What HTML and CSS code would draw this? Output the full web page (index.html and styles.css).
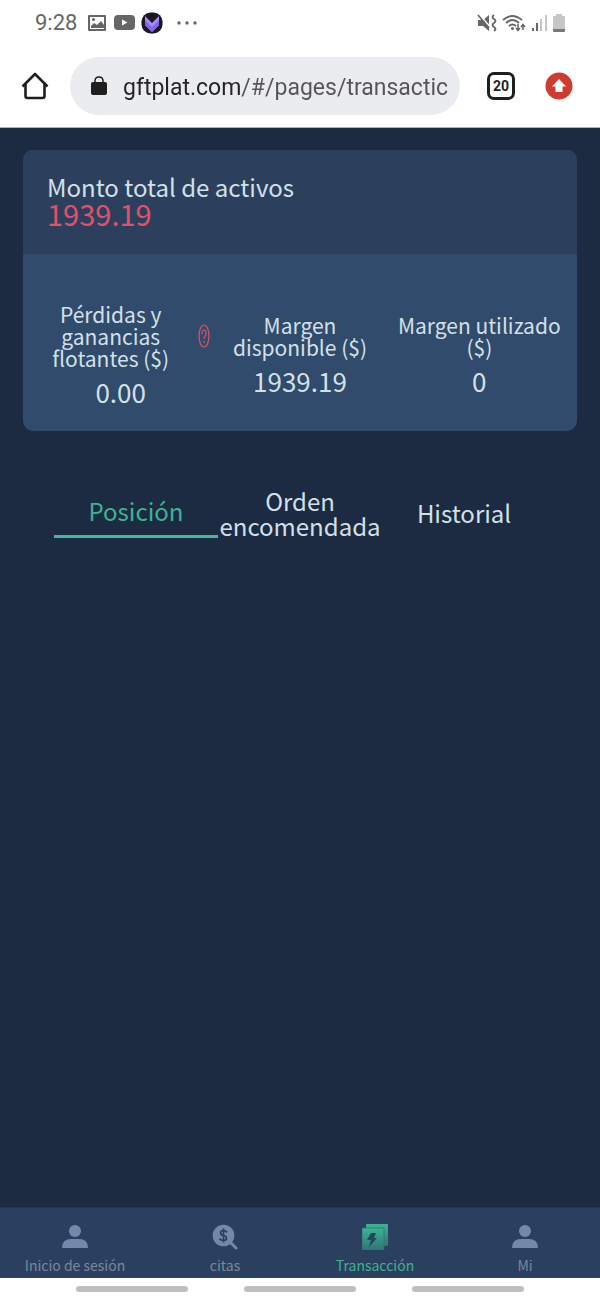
FILE: index.html
```html
<!DOCTYPE html>
<html lang="es">
<head>
<meta charset="utf-8">
<meta name="viewport" content="width=device-width, initial-scale=1">
<title>Transacción</title>
<link rel="stylesheet" href="styles.css">
</head>
<body>
<div class="status-bar">
  <span class="clock">9:28</span>
  <svg class="status-photo" width="18" height="18" viewBox="0 0 18 18"><path fill="#666" fill-rule="evenodd" d="M1 1h16q1 0 1 1v14q0 1-1 1H1q-1 0-1-1V2q0-1 1-1zM2 3v12h14V3z"/><path fill="#666" d="M3 14v-2l3-3 3 2 4-4 3 4v3z"/><circle cx="5.500" cy="5.500" r="1.600" fill="#666"/></svg>
  <svg class="status-video" width="22" height="18" viewBox="0 0 22 18"><rect x="0" y="1" width="21" height="15" rx="4" fill="#666"/><path fill="#fff" d="M8 5.500l5.500 3-5.500 3z"/></svg>
  <svg class="status-app" width="22" height="22" viewBox="0 0 22 22"><rect x=".5" y=".5" width="21" height="21" rx="9" fill="#1b1724"/><path fill="#a78bfa" d="M4 4l7 7 7-7v9l-7 7-7-7z"/><path fill="#8465ee" d="M4 8l7 7 7-7v5l-7 7-7-7z"/></svg>
  <svg class="status-more" width="20" height="6" viewBox="0 0 20 6" fill="#666"><circle cx="2" cy="3" r="1.700"/><circle cx="10" cy="3" r="1.700"/><circle cx="18" cy="3" r="1.700"/></svg>
  <div class="signals">
    <svg width="20" height="18" viewBox="0 0 20 18"><path fill="#666" d="M1 6h5l6-5v16l-6-5H1z"/><path d="M2 0l12 14" stroke="#fff" stroke-width="1.500"/><path d="M1 1l11 13M17 1q-3 2 0 4t0 4 0 4 0 4" stroke="#666" stroke-width="1.800" fill="none"/></svg>
    <svg width="24" height="18" viewBox="0 0 24 18"><path d="M1 6q9-8 19 0M4 9q6.500-6 13 0M7 12q3.500-3 7 0" fill="none" stroke="#666" stroke-width="1.800"/><circle cx="10.500" cy="14.500" r="1.500" fill="#666"/><path d="M16 10v6m-2-2l2 2.500 2-2.500M21 16v-5m-2 2l2-2.500 2 2.500" fill="none" stroke="#666" stroke-width="1.500"/></svg>
    <svg width="17" height="18" viewBox="0 0 17 18"><path fill="#666" d="M1 14h2v3H1zM5 9h2v8H5z"/><path fill="#c6c6c6" d="M9 5h2v12H9zM14 1h2v16h-2z"/></svg>
    <svg width="12" height="18" viewBox="0 0 12 18"><path fill="#c6c6c6" d="M3 0h6v2h2q1 0 1 1v12H0V3q0-1 1-1h2z"/><path fill="#777" d="M0 15h12v2q0 1-1 1H1q-1 0-1-1z"/></svg>
  </div>
</div>

<header class="toolbar">
  <button class="icon-button" aria-label="Inicio"><svg width="28" height="28" viewBox="0 0 28 28" fill="none" stroke="#1f1f1f" stroke-width="2.600" stroke-linejoin="round"><path d="M1.500 14.500L14 2l12.500 12.500"/><path d="M4.500 12v12q0 2 2 2h15q2 0 2-2V12"/></svg></button>
  <label class="address">
    <svg width="16" height="20" viewBox="0 0 16 20"><rect y="6" width="16" height="13" rx="2" fill="#1f1f1f"/><path d="M4 7V5q0-4 4-4t4 4v2" fill="none" stroke="#1f1f1f" stroke-width="1.500"/></svg>
    <input class="url" type="text" aria-label="Dirección web" value="gftplat.com/#/pages/transactic">
  </label>
  <button class="icon-button tab-count" aria-label="20 pestañas">20</button>
  <button class="icon-button" aria-label="Actualizar"><svg width="28" height="28" viewBox="0 0 28 28"><circle cx="14" cy="14" r="13.500" fill="#d03b2f"/><path fill="#fff" d="M14 7l7 7.500h-3.500V20h-7v-5.500H7z"/></svg></button>
</header>

<main class="app">
  <section class="card">
    <div class="card-head">
      <h1 class="card-title">Monto total de activos</h1>
      <div class="total">1939.19</div>
    </div>
    <div class="stats">
      <div class="stat">
        <div class="stat-label"><span class="stat-text">Pérdidas y ganancias flotantes ($)</span><button class="help" aria-label="Ayuda"><svg width="12" height="24" viewBox="0 0 12 24" fill="none" stroke="#e0526a"><ellipse cx="6" cy="12" rx="5" ry="11" stroke-width="1.200"/><path d="M4 10q0-4 2-4t2 3.500q0 1.500-1 2.500t-1 3M6 17v2" stroke-width="1.200"/></svg></button></div>
        <div class="stat-value">0.00</div>
      </div>
      <div class="stat">
        <div class="stat-label"><span class="stat-text">Margen disponible ($)</span></div>
        <div class="stat-value">1939.19</div>
      </div>
      <div class="stat">
        <div class="stat-label"><span class="stat-text">Margen utilizado ($)</span></div>
        <div class="stat-value">0</div>
      </div>
    </div>
  </section>
  <div class="tabs">
    <button class="tab tab-active">Posición</button>
    <button class="tab">Orden encomendada</button>
    <button class="tab">Historial</button>
  </div>
</main>

<nav class="bottom-nav">
  <a class="nav-item" href="#inicio"><svg width="26" height="26" viewBox="0 0 26 26" fill="#7389ab"><circle cx="13" cy="7" r="6"/><path d="M0 24q0-9 9-9h8q9 0 9 9z"/></svg>Inicio de sesión</a>
  <a class="nav-item" href="#citas"><svg width="26" height="26" viewBox="0 0 26 26"><circle cx="11.500" cy="11.500" r="10.800" fill="#7389ab"/><path d="M18 18l6 6" stroke="#7389ab" stroke-width="3" stroke-linecap="round"/><path d="M15 8.500q-1-2-3.500-2c-4 0-4 4.500 0 5s4 5 0 5q-3 0-4-2M11.500 4.500v14" fill="none" stroke="#2b405e" stroke-width="1.700"/></svg>citas</a>
  <a class="nav-item nav-active" href="#transaccion"><svg width="26" height="26" viewBox="0 0 26 26"><defs><linearGradient id="sheet" x2="0" y2="1"><stop stop-color="#3db394"/><stop offset="1" stop-color="#307575"/></linearGradient></defs><rect x="4" y="0" width="22" height="22" rx="1" fill="url(#sheet)"/><rect x="0" y="4" width="22" height="22" rx="1" fill="url(#sheet)" stroke="#2c7772" stroke-width=".8"/><path fill="#24485b" d="M9 9h5l-2 5h3l-8 9 2-7H5z"/></svg>Transacción</a>
  <a class="nav-item" href="#mi"><svg width="26" height="26" viewBox="0 0 26 26" fill="#7389ab"><circle cx="13" cy="7" r="6"/><path d="M0 24q0-9 9-9h8q9 0 9 9z"/></svg>Mi</a>
</nav>
<div class="gestures"><span class="handle"></span><span class="handle"></span><span class="handle"></span></div>
</body>
</html>
```
FILE: styles.css
```css
* { box-sizing: border-box; }
body {
  margin: 0;
  min-height: 100vh;
  display: flex;
  flex-direction: column;
  background: #fff;
  color: #d3e0e8;
  font-family: "Noto Sans CJK SC", "Noto Sans", sans-serif;
}
button { font: inherit; color: inherit; background: none; border: 0; padding: 0; }
svg { display: block; flex: none; }

.status-bar {
  height: 45px;
  padding: 0 35px;
  display: flex;
  align-items: center;
  color: #666;
  font: 22px Roboto, sans-serif;
}
.status-photo { margin-left: 11px; }
.status-video { margin-left: 8px; }
.status-app { margin-left: 5px; }
.status-more { margin-left: 14px; }
.signals { display: flex; gap: 5px; margin-left: auto; }

.toolbar {
  height: 83px;
  padding: 0 27px 0 21px;
  display: flex;
  align-items: center;
  border-bottom: 1px solid #a9b2c1;
  font-family: Roboto, sans-serif;
}
.icon-button { flex: none; }
.address {
  flex: 1;
  min-width: 0;
  height: 58px;
  margin: 0 27px 0 21px;
  padding: 0 12px 0 21px;
  display: flex;
  align-items: center;
  gap: 16px;
  border-radius: 29px;
  background: #ebecf0;
}
.url {
  flex: 1;
  min-width: 0;
  height: 40px;
  padding: 2px 0 0;
  border: 0;
  outline: 0;
  font: 23px Roboto, sans-serif;
  color: transparent;
  background: linear-gradient(90deg, #242424 119px, #555 119px);
  background-clip: text;
  -webkit-background-clip: text;
}
.tab-count {
  width: 28px;
  height: 28px;
  margin-right: 30px;
  border: 3px solid #1f1f1f;
  border-radius: 7px;
  color: #1f1f1f;
  font-size: 14px;
  font-weight: 700;
}

.app { flex: 1; padding: 22px 23px; background: #1c2b41; }
.card { border-radius: 10px; overflow: hidden; background: #304b6b; }
.card-head { height: 104px; padding: 25px 24px; background: #2c405d; }
.card-title { margin: 0; font-size: 24px; line-height: 24px; font-weight: 400; }
.total { color: #e0526a; font-size: 29px; line-height: 29px; }
.stats {
  min-height: 177px;
  padding: 22px 8px 0;
  display: grid;
  grid-template-columns: repeat(3, 1fr);
  align-items: center;
  text-align: center;
}
.stat-label { display: flex; align-items: center; font-size: 21px; line-height: 22px; }
.stat-text { flex: 1; padding: 0 8px; }
.help { flex: none; margin: 0 0 0 8px; }
.stat-value { margin-top: 10px; font-size: 26px; line-height: 26px; }

.tabs { display: grid; grid-template-columns: repeat(3, 1fr); margin: 57px 31px 0; }
.tab { height: 50px; padding-bottom: 2px; font-size: 24px; line-height: 25px; }
.tab-active { color: #3db394; border-bottom: 3px solid #48b69e; }

.bottom-nav {
  height: 71px;
  display: grid;
  grid-template-columns: repeat(4, 1fr);
  background: #2b405e;
  border-top: 1px solid #25374f;
}
.nav-item {
  display: flex;
  flex-direction: column;
  align-items: center;
  gap: 7px;
  padding-top: 16px;
  color: #7a879d;
  font-size: 14px;
  line-height: 16px;
  text-decoration: none;
}
.nav-active { color: #3db394; }
.gestures { height: 22px; display: flex; justify-content: center; align-items: center; gap: 56px; }
.handle { width: 112px; height: 6px; border-radius: 3px; background: #bfbfbf; }
```
